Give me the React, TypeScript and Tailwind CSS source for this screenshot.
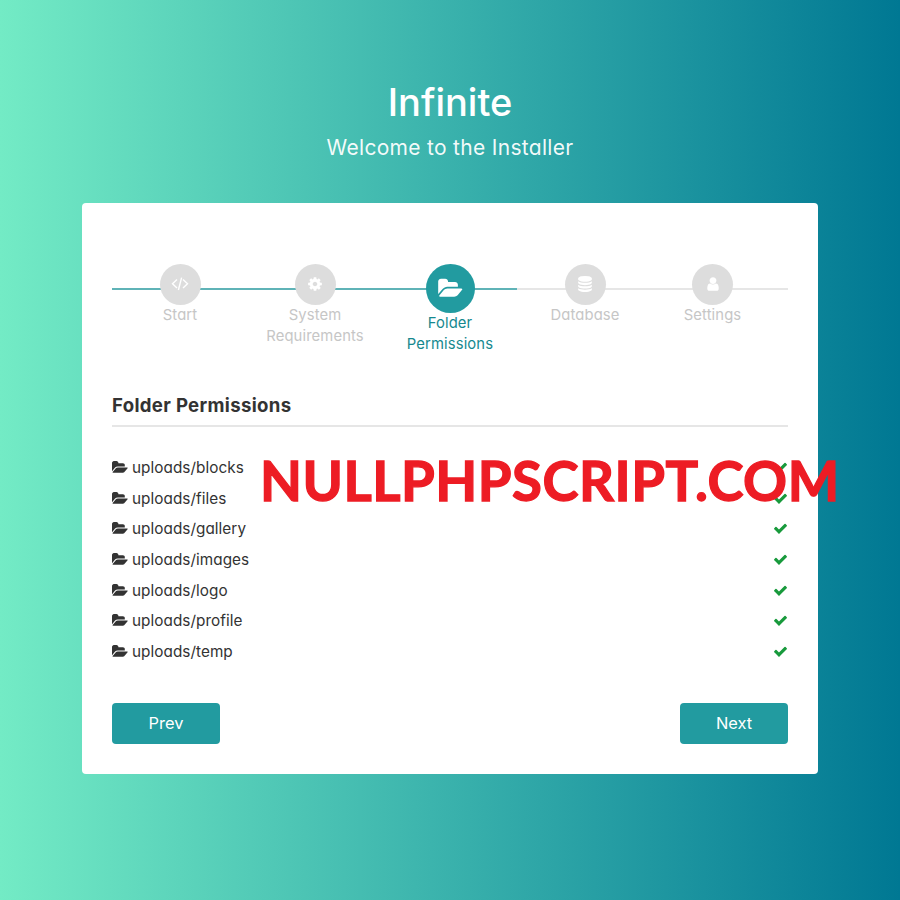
import type { ReactNode } from "react";

const FOLDER =
  "M1879 952q0 31-31 66l-336 396q-43 51-120.5 86.5T1248 1536H160q-34 0-60.5-13T73 1480q0-31 31-66l336-396q43-51 120.5-86.5T704 896h1088q34 0 60.5 13t26.5 43zM1536 608v160H704q-94 0-197 47.5T343 935L6 1331l-5 6q0-4-.5-12.5T0 1312V352q0-92 66-158t158-66h320q92 0 158 66t66 158v32h544q92 0 158 66t66 158z";
const CHECK =
  "M1671 566q0 40-28 68L919 1358l-136 136q-28 28-68 28t-68-28l-136-136-362-362q-28-28-28-68t28-68l136-136q28-28 68-28t68 28l294 295 656-657q28-28 68-28t68 28l136 136q28 28 28 68z";
const USER =
  "M1536 1399q0 109-62.5 187t-150.5 78H469q-88 0-150.5-78T256 1399q0-85 8.5-160.5t31.5-152 58.5-131 94-89T583 832q131 128 313 128t313-128q76 0 134.5 34.5t94 89 58.5 131 31.5 152 8.5 160.5zm-256-887q0 159-112.5 271.5T896 896 624.5 783.5 512 512t112.5-271.5T896 128t271.5 112.5T1280 512z";
const COG =
  "M1152 896q0-106-75-181t-181-75-181 75-75 181 75 181 181 75 181-75 75-181zm512-109v222q0 12-8 23t-20 13l-185 28q-19 54-39 91 35 50 107 138 10 12 10 25t-9 23q-27 37-99 108t-94 71q-12 0-26-9l-138-108q-44 23-91 38-16 136-29 186-7 28-36 28H785q-14 0-24.5-8.5T749 1634l-28-184q-49-16-90-37l-141 107q-10 9-25 9-14 0-25-11-126-114-165-168-7-10-7-23 0-12 8-23 15-21 51-66.5t54-70.5q-27-50-41-99l-183-27q-13-2-21-12.5t-8-23.5V783q0-12 8-23t19-13l186-28q14-46 39-92-40-57-107-138-10-12-10-24 0-10 9-23 26-36 98.5-107.5T465 263q13 0 26 10l138 107q44-23 91-38 16-136 29-186 7-28 36-28h222q14 0 24.5 8.5T1043 158l28 184q49 16 90 37l142-107q9-9 24-9 13 0 25 10 129 119 165 170 7 8 7 22 0 12-8 23-15 21-51 66.5t-54 70.5q26 50 41 98l183 28q13 2 21 12.5t8 23.5z";
const DATABASE =
  "M896 768q237 0 443-43t325-127v170q0 69-103 128t-280 93.5-385 34.5-385-34.5T231 896 128 768V598q119 84 325 127t443 43zm0 768q237 0 443-43t325-127v170q0 69-103 128t-280 93.5-385 34.5-385-34.5-280-93.5-103-128v-170q119 84 325 127t443 43zm0-384q237 0 443-43t325-127v170q0 69-103 128t-280 93.5-385 34.5-385-34.5-280-93.5-103-128V982q119 84 325 127t443 43zM896 0q208 0 385 34.5t280 93.5 103 128v128q0 69-103 128t-280 93.5T896 640t-385-34.5T231 512 128 384V256q0-69 103-128t280-93.5T896 0z";

function Glyph({ d, className, box = "0 0 1792 1792" }: { d: string; className: string; box?: string }) {
  return (
    <svg viewBox={box} fill="currentColor" className={className}>
      <path d={d} />
    </svg>
  );
}

function CodeIcon() {
  return (
    <svg viewBox="0 0 18 16" fill="none" stroke="currentColor" strokeWidth="1.4" className="h-4 w-[18px]">
      <path d="M6 3.600 1.500 7.800 6 12M12 3.600l4.500 4.200-4.500 4.200M10.600 1.600 7.400 14" />
    </svg>
  );
}

type StepProps = { icon: ReactNode; lines: string[]; width: string; active?: boolean };

function Step({ icon, lines, width, active }: StepProps) {
  return (
    <div className={`flex flex-col items-center ${width} ${active ? "text-[#16898f]" : "text-[#c6c6c6]"}`}>
      <div
        className={
          active
            ? "flex size-[49px] items-center justify-center rounded-full bg-[#229ba0] text-white"
            : "flex size-[41px] items-center justify-center rounded-full bg-[#ddd] pb-px text-white"
        }
      >
        {icon}
      </div>
      <div className="text-center text-[14.8px] leading-[20.500px] tracking-[0.12px] whitespace-nowrap">
        {lines.map((l) => (
          <div key={l}>{l}</div>
        ))}
      </div>
    </div>
  );
}

const folders = ["blocks", "files", "gallery", "images", "logo", "profile", "temp"];

export default function App() {
  return (
    <div className="relative flex h-[900px] w-[900px] flex-col items-center overflow-hidden bg-[linear-gradient(to_right,#73ebc5,#007893)] font-['Inter','Open_Sans',sans-serif] [font-feature-settings:'cv11']">
      <h1 className="mt-[78px] h-[48px] text-[38px] leading-[48px] font-medium text-white">Infinite</h1>
      <p className="mt-[7px] h-[30px] text-[21px] leading-[30px] tracking-[0.3px] text-white/95">Welcome to the Installer</p>

      <main className="mt-[40px] h-[571px] w-[736px] rounded bg-white pt-[61px] pr-[30px] pl-[30px]">
        <div className="relative h-[92px]">
          <div className="absolute top-[24px] right-0 left-0 h-[2px] bg-[#e6e6e6]">
            <div className="h-full w-[405px] bg-[#5fb3b7]" />
          </div>
          <div className="relative flex items-start pl-[0.500px]">
            <Step icon={<CodeIcon />} lines={["Start"]} width="w-[135px]" />
            <Step icon={<Glyph d={COG} className="size-4" />} lines={["System", "Requirements"]} width="w-[135px]" />
            <Step
              icon={<Glyph d={FOLDER} box="0 0 1920 1792" className="h-[23px] w-[25px]" />}
              lines={["Folder", "Permissions"]}
              width="w-[135px]"
              active
            />
            <Step icon={<Glyph d={DATABASE} className="size-4" />} lines={["Database"]} width="w-[135px]" />
            <Step icon={<Glyph d={USER} className="size-4" />} lines={["Settings"]} width="w-[120px]" />
          </div>
        </div>

        <h2 className="mt-[34px] h-[37px] border-b-2 border-[#e6e6e6] text-[18.600px] leading-[30px] font-bold tracking-[0.33px] text-[#333]">
          Folder Permissions
        </h2>

        <ul className="mt-[26px]">
          {folders.map((f) => (
            <li key={f} className="flex h-[30.700px] items-center justify-between text-[15.300px] tracking-[0.05px] text-[#333]">
              <span className="flex items-center gap-1">
                <Glyph d={FOLDER} box="0 0 1920 1792" className="-mt-0.5 h-[15px] w-[16px]" />
                uploads/{f}
              </span>
              <Glyph d={CHECK} className="-mt-0.5 size-[15px] text-[#189a3c]" />
            </li>
          ))}
        </ul>

        <div className="mt-[35px] flex justify-between text-[16.400px] text-white">
          <button className="h-[41px] w-[108px] rounded bg-[#229ba0]">Prev</button>
          <button className="h-[41px] w-[108px] rounded bg-[#229ba0]">Next</button>
        </div>
      </main>

      <div className="absolute top-[447px] left-[260px] font-['Lato',sans-serif] text-[54.500px] leading-[66px] font-bold tracking-[0.500px] whitespace-nowrap text-[#ed1c24] [-webkit-text-stroke:1.3px_#ed1c24]">
        NULLPHPSCRIPT.COM
      </div>
    </div>
  );
}
